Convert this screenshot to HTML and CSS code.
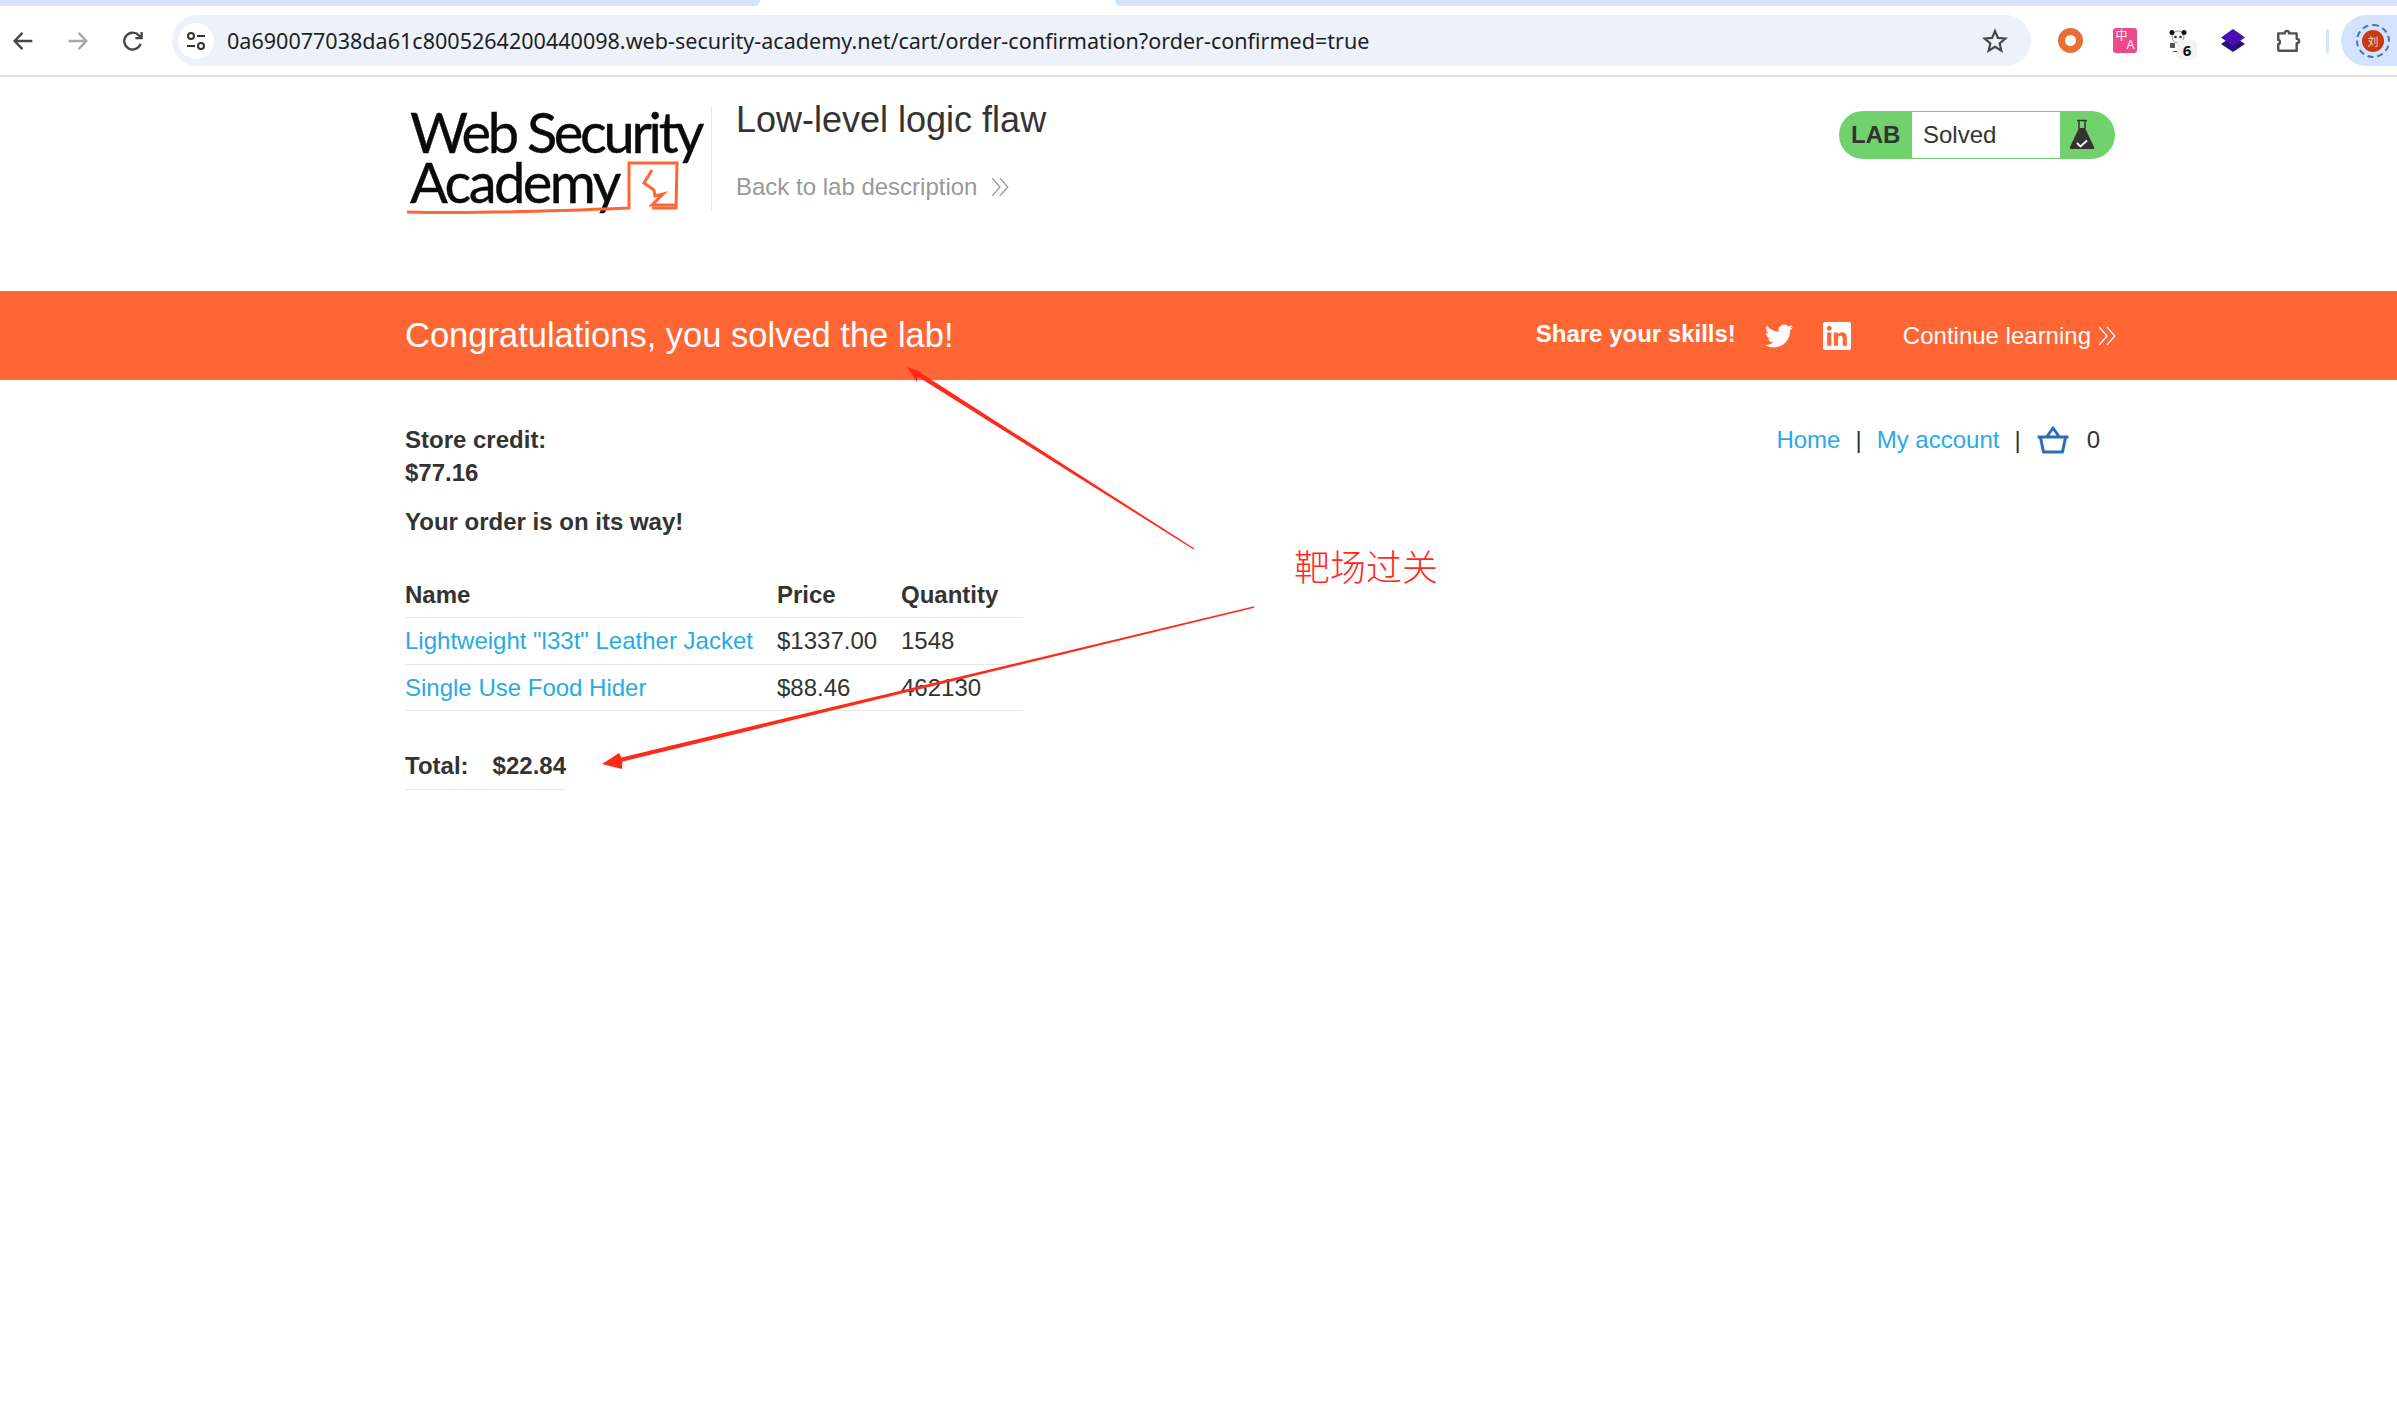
FILE: index.html
```html
<!DOCTYPE html>
<html>
<head>
  <title>Low-level logic flaw</title>
  <link rel="stylesheet" href="styles.css">
</head>
<body>

  <div class="tabstrip">
    <div class="tab-left"></div>
    <div class="tab-right"></div>
  </div>

  <div class="toolbar">
    <svg class="tool-icon" viewBox="0 0 24 24"><path d="M20 12H5M11.5 5L4.8 12l6.7 7" fill="none" stroke="#474747" stroke-width="2"/></svg>
    <svg class="tool-icon" viewBox="0 0 24 24"><path d="M4 12h15M12.5 5l6.7 7-6.7 7" fill="none" stroke="#a8a8a8" stroke-width="2"/></svg>
    <svg class="tool-icon" viewBox="0 0 24 24"><path d="M18.5 14.5A7.2 7.2 0 1 1 17 7.2L19 9.4M19.4 4.2v5.4H14" fill="none" stroke="#474747" stroke-width="2"/></svg>
    <div class="urlbar">
      <span class="site-btn">
        <svg viewBox="0 0 24 24" width="24" height="24"><circle cx="7" cy="7" r="3" fill="none" stroke="#333" stroke-width="2"/><path d="M13 7h8M3 17h8" stroke="#333" stroke-width="2"/><circle cx="17" cy="17" r="3" fill="none" stroke="#333" stroke-width="2"/></svg>
      </span>
      <span class="url-text">0a690077038da61c8005264200440098.web-security-academy.net/cart/order-confirmation?order-confirmed=true</span>
      <svg class="star" viewBox="0 0 24 24"><path d="M12 2.8l2.7 6.3 6.8.6-5.2 4.5 1.6 6.7-5.9-3.6-5.9 3.6 1.6-6.7L2.500 9.700l6.800-.6z" fill="none" stroke="#474747" stroke-width="2"/></svg>
    </div>
    <div class="extensions">
      <span class="ext-ring"></span>
      <span class="ext-translate"><span class="zh">中</span><span class="en">A</span></span>
      <span class="ext-panda">
        <svg viewBox="0 0 20 24" width="20" height="24"><circle cx="9" cy="7" r="6" fill="#f4f4f4" stroke="#999"/><circle cx="3" cy="2.500" r="2.500" fill="#111"/><circle cx="15" cy="2.500" r="2.500" fill="#111"/><circle cx="6.500" cy="7" r="1.300" fill="#333"/><circle cx="11.500" cy="7" r="1.300" fill="#333"/><path d="M1 13h5v5H1zM4 21h10v1H4z" fill="#555"/></svg>
        <span class="ext-badge">6</span>
      </span>
      <svg class="ext-layers" viewBox="0 0 26 26"><path d="M13 8l12 8-12 8-12-8z" fill="#24107a"/><path d="M13 1l12 8.500-12 8.500-12-8.500z" fill="#4a0fb0"/></svg>
      <svg class="ext-puzzle" viewBox="0 0 24 24"><path d="M3 5h6c0-3 4-3 4 0h7v5c3 0 3 4 0 4v7H4c-1 0-1-1-1-1v-5c2 0 2-4 0-4z" fill="none" stroke="#505050" stroke-width="2.200" stroke-linejoin="round"/></svg>
      <span class="ext-divider"></span>
      <span class="profile">
        <span class="avatar-ring"><span class="avatar">刘</span></span>
      </span>
    </div>
  </div>

  <div class="lab-header">
    <div class="logo">
      <div class="logo-line logo-first">Web Security</div>
      <div class="logo-line logo-second">Academy</div>
      <svg class="logo-mark" viewBox="0 0 300 110" width="300" height="110">
        <path d="M2 105c70 2 150-1 222-4V56h48l-1 45h-24" fill="none" stroke="#ff6633" stroke-width="3"/>
        <path d="M247 63l-8 13 10 7 1 6 8-2-11 11h24" fill="none" stroke="#ff6633" stroke-width="3"/>
      </svg>
    </div>
    <div class="lab-title">
      <h2>Low-level logic flaw</h2>
      <a class="back-link" href="#">Back to lab description<svg class="chevrons" viewBox="0 0 18 18"><path d="M2 1l7 8-7 8M9 1l7 8-7 8" fill="none" stroke="currentColor" stroke-width="1.200"/></svg></a>
    </div>
    <div class="lab-status">
      <span class="lab-word">LAB</span>
      <span class="lab-state">Solved</span>
      <span class="lab-flask">
        <svg viewBox="0 0 26 32" width="26" height="32"><path d="M10 9h6l9 19c.6 1.300 0 2-1 2H2c-1 0-1.600-.7-1-2z" fill="#333332"/><path d="M8 1.500h10M10 1.500v8M16 1.500v8" fill="none" stroke="#333332" stroke-width="1.500"/><path d="M8 24l3.500 3.500L18 21.500" fill="none" stroke="#fff" stroke-width="1.800"/></svg>
      </span>
    </div>
  </div>

  <div class="banner">
    <div class="banner-inner">
      <h4>Congratulations, you solved the lab!</h4>
      <div class="banner-right">
        <span class="share">Share your skills!</span>
        <svg class="social" viewBox="0 0 24 24"><path fill="#fff" d="M23.953 4.57a10 10 0 01-2.825.775 4.958 4.958 0 002.163-2.723c-.951.555-2.005.959-3.127 1.184a4.92 4.92 0 00-8.384 4.482C7.69 8.095 4.067 6.13 1.64 3.162a4.822 4.822 0 00-.666 2.475c0 1.71.87 3.213 2.188 4.096a4.904 4.904 0 01-2.228-.616v.06a4.923 4.923 0 003.946 4.827 4.996 4.996 0 01-2.212.085 4.936 4.936 0 004.604 3.417 9.867 9.867 0 01-6.102 2.105c-.39 0-.779-.023-1.17-.067a13.995 13.995 0 007.557 2.209c9.053 0 13.998-7.496 13.998-13.985 0-.21 0-.42-.015-.63A9.935 9.935 0 0024 4.59z"/></svg>
        <svg class="social linkedin" viewBox="0 0 24 24"><path fill="#fff" d="M20.447 20.452h-3.554v-5.569c0-1.328-.027-3.037-1.852-3.037-1.853 0-2.136 1.445-2.136 2.939v5.667H9.351V9h3.414v1.561h.046c.477-.9 1.637-1.85 3.37-1.85 3.601 0 4.267 2.37 4.267 5.455v6.286zM5.337 7.433c-1.144 0-2.063-.926-2.063-2.065 0-1.138.92-2.063 2.063-2.063 1.14 0 2.064.925 2.064 2.063 0 1.139-.925 2.065-2.064 2.065zm1.782 13.019H3.555V9h3.564v11.452zM22.225 0H1.771C.792 0 0 .774 0 1.729v20.542C0 23.227.792 24 1.771 24h20.451C23.2 24 24 23.227 24 22.271V1.729C24 .774 23.2 0 22.222 0h.003z"/></svg>
        <a class="continue" href="#">Continue learning<svg class="chevrons tight" viewBox="0 0 18 18"><path d="M2 1l7 8-7 8M9 1l7 8-7 8" fill="none" stroke="currentColor" stroke-width="1.200"/></svg></a>
      </div>
    </div>
  </div>

  <div class="main">
    <div class="order">
      <p class="credit"><strong>Store credit:<br>$77.16</strong></p>
      <p class="on-way"><strong>Your order is on its way!</strong></p>
      <table class="cart">
        <tr>
          <th class="col-name">Name</th>
          <th class="col-price">Price</th>
          <th>Quantity</th>
        </tr>
        <tr>
          <td><a href="#">Lightweight "l33t" Leather Jacket</a></td>
          <td>$1337.00</td>
          <td>1548</td>
        </tr>
        <tr>
          <td><a href="#">Single Use Food Hider</a></td>
          <td>$88.46</td>
          <td>462130</td>
        </tr>
      </table>
      <table class="total">
        <tr>
          <th class="total-label">Total:</th>
          <th>$22.84</th>
        </tr>
      </table>
    </div>
    <nav class="top-links">
      <a href="#">Home</a>
      <span class="sep">|</span>
      <a href="#">My account</a>
      <span class="sep">|</span>
      <svg class="basket" viewBox="0 0 34 28"><path d="M1.500 11h31M4.500 11.500l3 14.500h19l3-14.500M11 10.500L17 2l6 8.500" fill="none" stroke="#2a6eb5" stroke-width="3" stroke-linejoin="round"/></svg>
      <span class="count">0</span>
    </nav>
  </div>

  <!-- screenshot markup drawn on top of the page -->
  <svg class="markup" viewBox="0 0 2397 1401" width="2397" height="1401">
    <path d="M1194.400 548.400L920 372.600L924 373L907 367L917 382L917.600 376.400L1193.600 549.600z" fill="#ff2a1a"/>
    <path d="M1254 606.300L621.500 757.400L619 753L602 764L622 769L622.500 761.600L1254.300 607.700z" fill="#ff2a1a"/>
  </svg>
  <div class="markup-label">靶场过关</div>

</body>
</html>
```

FILE: styles.css
```css
body {
  margin: 0;
  background: #fff;
  font-family: "Liberation Sans", Arial, sans-serif;
  font-size: 24px;
  line-height: 33.6px;
  color: #333332;
  min-height: 1401px;
  position: relative;
  overflow: hidden;
}

a {
  color: #29abe2;
  text-decoration: none;
}

/* browser chrome */
.tabstrip {
  display: flex;
  justify-content: space-between;
  height: 6px;
}

.tab-left {
  width: 760px;
  background: #d3e3fd;
  border-bottom-right-radius: 6px;
}

.tab-right {
  width: 1282px;
  background: #d3e3fd;
  border-bottom-left-radius: 6px;
}

.toolbar {
  display: flex;
  align-items: center;
  height: 69px;
  padding-left: 9px;
  border-bottom: 2px solid #e0e0e0;
  box-sizing: content-box;
}

.tool-icon {
  width: 28px;
  height: 28px;
  margin-right: 27px;
  flex: none;
}

.urlbar {
  display: flex;
  align-items: center;
  width: 1859px;
  height: 51px;
  margin-left: -2px;
  padding-left: 6px;
  box-sizing: border-box;
  background: #ecf1fa;
  border-radius: 26px;
  flex: none;
}

.site-btn {
  display: flex;
  align-items: center;
  justify-content: center;
  width: 36px;
  height: 36px;
  background: #fff;
  border-radius: 50%;
  flex: none;
}

.url-text {
  margin-left: 13px;
  font-family: "Noto Sans", sans-serif;
  font-size: 21.55px;
  color: #1f1f1f;
  white-space: nowrap;
  flex: 1;
}

.star {
  width: 26px;
  height: 26px;
  margin-right: 23px;
  flex: none;
}

.extensions {
  display: flex;
  align-items: center;
  flex: 1;
  padding-left: 27px;
}

.ext-ring {
  width: 25px;
  height: 25px;
  box-sizing: border-box;
  border: 7px solid #e66f33;
  border-radius: 50%;
  margin-right: 30px;
}

.ext-translate {
  display: flex;
  justify-content: center;
  width: 24px;
  height: 25px;
  background: #ec4a8b;
  border-radius: 3px;
  color: #fff;
  font-size: 12px;
  line-height: 12px;
  margin-right: 32px;
}

.zh {
  font-family: "Noto Sans CJK SC", sans-serif;
  margin-top: 1px;
}

.en {
  font-family: "Liberation Sans", sans-serif;
  margin: 11px 0 0 -1px;
}

.ext-panda {
  position: relative;
  display: block;
  width: 20px;
  height: 24px;
  margin-right: 31px;
}

.ext-badge {
  position: absolute;
  left: 8px;
  top: 11px;
  width: 20px;
  height: 20px;
  background: #f3f3f3;
  border-radius: 5px;
  color: #111;
  font-family: "Noto Sans", sans-serif;
  font-size: 15px;
  font-weight: 700;
  line-height: 20px;
  text-align: center;
}

.ext-layers {
  width: 26px;
  height: 26px;
  margin-right: 29px;
}

.ext-puzzle {
  width: 26px;
  height: 26px;
  margin-right: 25px;
}

.ext-divider {
  width: 3px;
  height: 24px;
  background: #d3e3fd;
  border-radius: 2px;
  margin-right: 12px;
}

.profile {
  display: flex;
  align-items: center;
  flex: 1;
  height: 51px;
  padding-left: 15px;
  background: #d3e3fd;
  border-radius: 26px 0 0 26px;
}

.avatar-ring {
  display: flex;
  align-items: center;
  justify-content: center;
  width: 30px;
  height: 30px;
  border: 2px dashed #4a74b4;
  border-radius: 50%;
}

.avatar {
  width: 22px;
  height: 22px;
  background: #c93a0e;
  border-radius: 50%;
  color: #f5d8c8;
  font-family: "Noto Sans CJK SC", sans-serif;
  font-size: 11px;
  line-height: 22px;
  text-align: center;
}

/* lab header */
.lab-header {
  display: flex;
  align-items: flex-start;
  width: 1710px;
  height: 214px;
  margin-left: 405px;
  box-sizing: border-box;
  padding-top: 30px;
}

.logo {
  position: relative;
  width: 306px;
  height: 104px;
  border-right: 1px solid #e6e6e6;
  font-family: "Lato", sans-serif;
  font-size: 56px;
  line-height: 50px;
  -webkit-text-stroke: 0.4px #0a0a0a;
  color: #0a0a0a;
  white-space: nowrap;
  flex: none;
}

.logo-line {
  padding-left: 5px;
}

.logo-first {
  letter-spacing: -3.3px;
}

.logo-second {
  letter-spacing: -2.6px;
}

.logo-mark {
  position: absolute;
  left: 0;
  top: 0;
}

.lab-title {
  margin: -7px 0 0 24px;
  flex: 1;
}

.lab-title h2 {
  margin: 0;
  font-size: 36px;
  font-weight: 400;
  line-height: 40px;
  color: #333332;
}

.back-link {
  display: inline-block;
  margin-top: 30px;
  color: #999;
}

.chevrons {
  width: 20px;
  height: 20px;
  margin-left: 13px;
  vertical-align: -2px;
}

.chevrons.tight {
  margin: 0 -2px 0 6px;
}

.lab-status {
  display: flex;
  align-items: stretch;
  height: 48px;
  margin-top: 4px;
  background: #70d16d;
  border-radius: 24px;
  flex: none;
}

.lab-word {
  width: 73px;
  box-sizing: border-box;
  padding-left: 12px;
  font-weight: 700;
  line-height: 48px;
}

.lab-state {
  width: 148px;
  box-sizing: border-box;
  margin: 1px 0;
  padding-left: 11px;
  background: #fff;
  line-height: 46px;
}

.lab-flask {
  display: flex;
  align-items: center;
  width: 55px;
  padding-left: 9px;
  box-sizing: border-box;
}

/* solved banner */
.banner {
  height: 89px;
  background: #ff6633;
  color: #fff;
}

.banner-inner {
  display: flex;
  align-items: center;
  justify-content: space-between;
  width: 1710px;
  height: 89px;
  margin-left: 405px;
}

.banner-inner h4 {
  margin: 0;
  font-size: 34.5px;
  font-weight: 400;
}

.banner-right {
  display: flex;
  align-items: center;
}

.share {
  font-weight: 700;
  margin-right: 29px;
  position: relative;
  top: -2px;
}

.social {
  width: 28px;
  height: 28px;
  margin-right: 30px;
}

.social.linkedin {
  margin-right: 52px;
}

.continue {
  color: #fff;
}

/* order */
.main {
  display: flex;
  justify-content: space-between;
  width: 1710px;
  margin-left: 405px;
  padding-top: 43px;
}

.order p {
  margin: 0;
}

.credit {
  line-height: 33px;
}

.on-way {
  padding-top: 16px;
}

.cart {
  width: 617px;
  margin-top: 33px;
  border-collapse: collapse;
}

.cart th, .cart td,
.total th {
  padding: 6px 0;
  text-align: left;
  border-bottom: 1px solid #e6e6e6;
}

.col-name {
  width: 372px;
}

.col-price {
  width: 124px;
}

.total {
  width: 161px;
  margin-top: 32px;
  border-collapse: collapse;
}

.total-label {
  width: 88px;
}

.top-links {
  display: flex;
  align-items: flex-start;
  padding-right: 15px;
}

.sep {
  margin: 0 15px;
}

.basket {
  width: 34px;
  height: 28px;
  margin: 3px 17px 0 0;
}

/* annotation layer */
.markup {
  position: absolute;
  left: 0;
  top: 0;
  pointer-events: none;
}

.markup-label {
  position: absolute;
  left: 1294px;
  top: 540px;
  font-family: "Noto Sans CJK SC", sans-serif;
  font-size: 36px;
  font-weight: 300;
  line-height: 50px;
  color: #ff2a1a;
}
```
